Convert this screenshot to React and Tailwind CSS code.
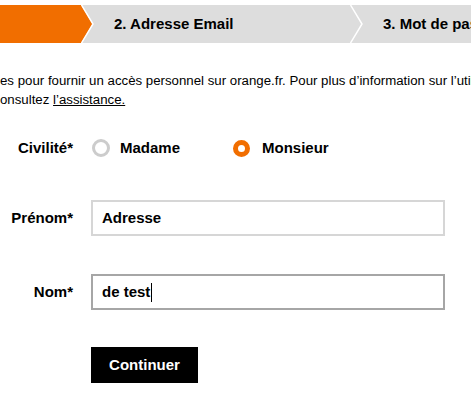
import React from "react";

function Chevron({ left, right }) {
  return (
    <svg width="14" height="38" viewBox="0 0 14 38" className="block shrink-0" style={{ background: right }}>
      {left && <polygon points="0,0 11.5,19 0,38" fill={left} />}
      <polyline points="0.5,0 12,19 0.5,38" fill="none" stroke="#ffffff" strokeWidth="1.5" />
    </svg>
  );
}

export default function App() {
  return (
    <div className="w-[471px] h-[405px] overflow-hidden bg-white text-black font-['Liberation_Sans',Arial,sans-serif]">
      <div className="pt-[5px] flex h-[43px] box-border">
        <div className="flex h-[38px] w-full bg-[#dddddd] overflow-hidden">
          <div className="w-[81px] shrink-0 bg-[#f16e00]" />
          <Chevron left="#f16e00" right="#dddddd" />
          <div className="w-[255px] shrink-0 pl-[19px] flex items-center text-[15px] font-bold whitespace-nowrap">
            2. Adresse Email
          </div>
          <Chevron right="#dddddd" />
          <div className="pl-[19px] flex items-center text-[15px] font-bold whitespace-nowrap">
            3. Mot de passe
          </div>
        </div>
      </div>

      <div className="mt-[28px] text-[13.25px] leading-[19px] whitespace-nowrap overflow-hidden">
        <div>es pour fournir un accès personnel sur orange.fr. Pour plus d’information sur l’utilisation</div>
        <div>
          onsultez <span className="underline">l’assistance.</span>
        </div>
      </div>

      <div className="mt-[29px] flex items-center h-[20px]">
        <div className="w-[73px] text-right text-[15px] font-bold">Civilité*</div>
        <div className="ml-[19px] flex items-center">
          <span className="w-[18px] h-[18px] rounded-full border-[3px] border-[#cccccc] box-border" />
          <span className="ml-[10px] text-[15px] font-bold">Madame</span>
        </div>
        <div className="ml-[53px] flex items-center">
          <span className="w-[17px] h-[17px] rounded-full border-[5px] border-[#f16e00] box-border" />
          <span className="ml-[12px] text-[15px] font-bold">Monsieur</span>
        </div>
      </div>

      <div className="mt-[42px] flex items-center">
        <div className="w-[73px] text-right text-[15px] font-bold">Prénom*</div>
        <div className="ml-[18px] w-[354px] h-[36px] border-2 border-[#d6d6d6] box-border flex items-center pl-[9px] text-[15px] font-bold">
          Adresse
        </div>
      </div>

      <div className="mt-[38px] flex items-center">
        <div className="w-[73px] text-right text-[15px] font-bold">Nom*</div>
        <div className="ml-[18px] w-[354px] h-[36px] border-2 border-[#a6a6a6] box-border flex items-center pl-[9px] text-[15px] font-bold">
          de test<span className="inline-block w-px h-[19px] bg-black ml-px" />
        </div>
      </div>

      <div className="mt-[37px] pl-[91px]">
        <button className="w-[107px] h-[36px] bg-black text-white text-[15px] font-bold">Continuer</button>
      </div>
    </div>
  );
}
